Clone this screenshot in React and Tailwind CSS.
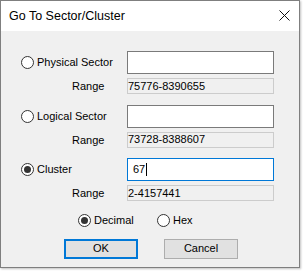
import React, { useState } from 'react';

function Radio({ checked, onClick, label, className = '' }) {
  return (
    <button type="button" onClick={onClick} className={`flex items-center gap-[3px] ${className}`}>
      <span className="w-[13px] h-[13px] rounded-full border border-[#333333] bg-white flex items-center justify-center">
        {checked && <span className="w-[7px] h-[7px] rounded-full bg-[#333333]" />}
      </span>
      <span className="text-[11px] text-black leading-none">{label}</span>
    </button>
  );
}

function Field({ label, range, checked, onSelect, value, focused }) {
  return (
    <div className="flex flex-col">
      <div className="flex items-center">
        <div className="w-[106px]">
          <Radio checked={checked} onClick={onSelect} label={label} />
        </div>
        <div
          className={`w-[147px] h-[23px] bg-white flex items-center px-[5px] ${
            focused ? 'border border-[#0078d7]' : 'border border-[#7a7a7a]'
          }`}
        >
          <span className="text-[11px] text-black">{value}</span>
          {focused && <span className="w-px h-[13px] bg-black ml-[1px]" />}
        </div>
      </div>
      <div className="flex items-center mt-[4px]">
        <div className="w-[106px] pl-[51px] text-[11px] text-black">Range</div>
        <div className="w-[147px] h-[16px] border border-[#cccccc] flex items-center text-[11px] text-black leading-none">
          {range}
        </div>
      </div>
    </div>
  );
}

export default function App() {
  const [mode, setMode] = useState('cluster');
  const [base, setBase] = useState('dec');

  return (
    <div className="w-[303px] h-[271px] bg-white" style={{ fontFamily: '"Liberation Sans", Arial, sans-serif' }}>
      <div className="w-[300px] h-[268px] border border-[#7f7f7f] flex flex-col shadow-[1px_1px_2px_rgba(0,0,0,0.25)]">
        <div className="h-[30px] bg-white flex items-center justify-between pl-[8px] pr-[9px] shrink-0">
          <span className="text-[12.5px] text-black">Go To Sector/Cluster</span>
          <svg width="11" height="11" viewBox="0 0 11 11" className="mt-[-1px]">
            <path d="M0.5 0.5 L10.5 10.5 M10.5 0.5 L0.5 10.5" stroke="#111" strokeWidth="1" />
          </svg>
        </div>
        <div className="flex-1 bg-[#f0f0f0] flex flex-col pl-[20px] pt-[20px]">
          <div className="flex flex-col gap-[10px]">
            <Field
              label="Physical Sector"
              range="75776-8390655"
              checked={mode === 'phys'}
              onSelect={() => setMode('phys')}
              value=""
            />
            <Field
              label="Logical Sector"
              range="73728-8388607"
              checked={mode === 'log'}
              onSelect={() => setMode('log')}
              value=""
            />
            <Field
              label="Cluster"
              range="2-4157441"
              checked={mode === 'cluster'}
              onSelect={() => setMode('cluster')}
              value="67"
              focused
            />
          </div>
          <div className="flex items-center mt-[12px] pl-[57px]">
            <Radio checked={base === 'dec'} onClick={() => setBase('dec')} label="Decimal" className="w-[79px]" />
            <Radio checked={base === 'hex'} onClick={() => setBase('hex')} label="Hex" />
          </div>
          <div className="flex items-center mt-[12px] pl-[43px] gap-[26px]">
            <button className="w-[74px] h-[20px] bg-[#e1e1e1] border-2 border-[#0078d7] text-[11px] text-black flex items-center justify-center">
              OK
            </button>
            <button className="w-[74px] h-[20px] bg-[#e1e1e1] border border-[#adadad] text-[11px] text-black flex items-center justify-center">
              Cancel
            </button>
          </div>
        </div>
      </div>
    </div>
  );
}
